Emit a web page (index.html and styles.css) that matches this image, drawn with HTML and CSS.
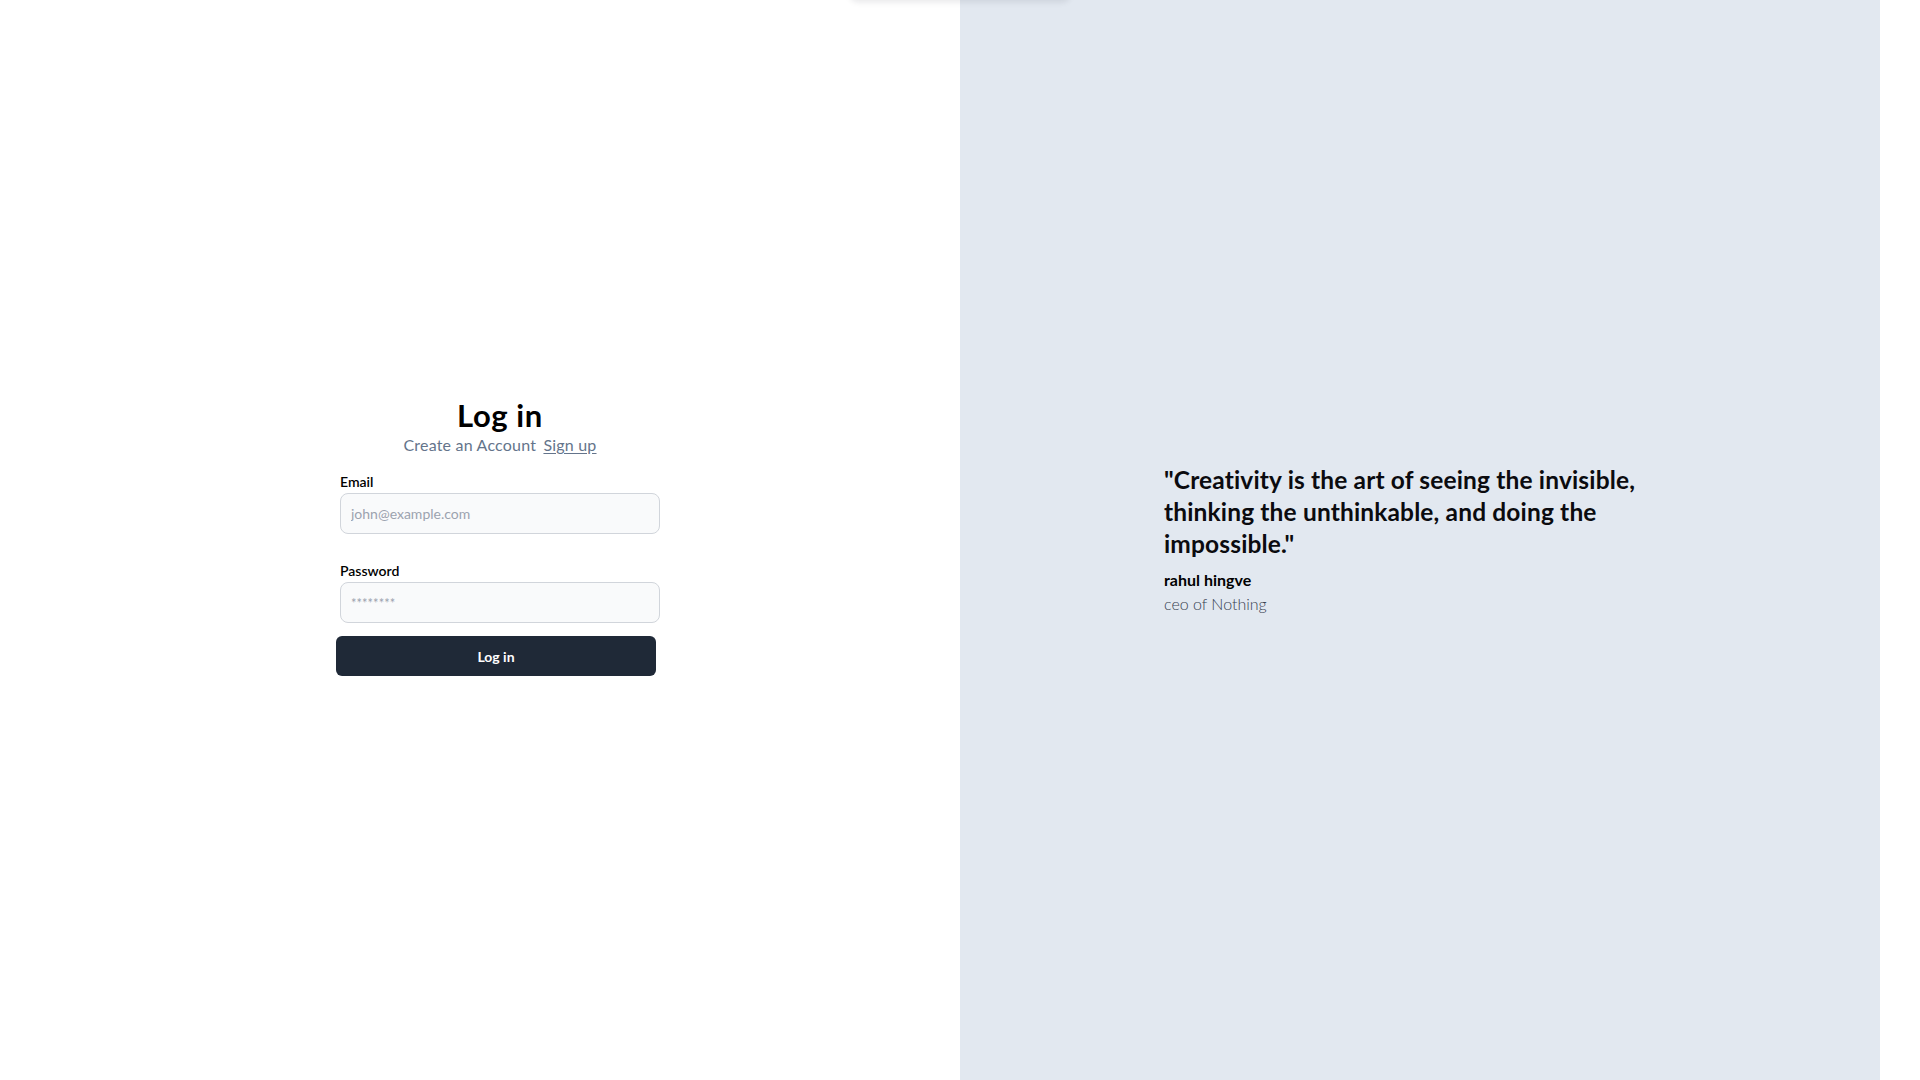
FILE: index.html
```html
<!DOCTYPE html>
<html lang="en">
<head>
<meta charset="utf-8">
<title>Log in</title>
<link rel="stylesheet" href="styles.css">
</head>
<body>
<div class="toast-ghost"></div>
<main class="page">
  <section class="auth-col">
    <form class="auth-form">
      <h1 class="auth-title">Log in</h1>
      <p class="auth-sub">Create an Account <a href="#" class="auth-link">Sign up</a></p>
      <label class="field-label" for="email">Email</label>
      <input class="field-input" id="email" type="email" placeholder="john@example.com">
      <label class="field-label field-label--spaced" for="password">Password</label>
      <input class="field-input field-input--pw" id="password" type="password" placeholder="********">
      <button class="btn-primary" type="button">Log in</button>
    </form>
  </section>
  <aside class="quote-col">
    <div class="quote-box">
      <blockquote class="quote-text">"Creativity is the art of seeing the invisible, thinking the unthinkable, and doing the impossible."</blockquote>
      <p class="quote-author">rahul hingve</p>
      <p class="quote-role">ceo of Nothing</p>
    </div>
  </aside>
</main>
</body>
</html>
```
FILE: styles.css
```css
* { box-sizing: border-box; }
html, body { margin: 0; padding: 0; background: #ffffff; }
body {
  font-family: "Lato", "Open Sans", "Liberation Sans", sans-serif;
  color: #030712;
  overflow: hidden;
}
.toast-ghost {
  position: absolute;
  top: -40px;
  left: 850px;
  width: 220px;
  height: 40px;
  border-radius: 8px;
  background: #fff;
  box-shadow: 0 2px 6px rgba(15, 23, 42, 0.10);
  z-index: 5;
}
.page {
  display: grid;
  grid-template-columns: 960px 920px;
  height: 1080px;
}
.auth-col {
  display: flex;
  align-items: center;
  justify-content: center;
  padding-left: 40px;
  padding-bottom: 7px;
}
.auth-form {
  width: 320px;
  display: flex;
  flex-direction: column;
}
.auth-title {
  margin: 0;
  font-size: 31px;
  line-height: 36px;
  font-weight: 700;
  letter-spacing: 0.6px;
  text-align: center;
  color: #000;
}
.auth-sub {
  margin: 0;
  font-size: 16px;
  line-height: 24px;
  letter-spacing: 0.2px;
  text-align: center;
  color: #64748b;
}
.auth-link {
  margin-left: 3px;
  color: #64748b;
  text-decoration: underline;
  text-underline-offset: 2px;
}
.field-label {
  display: block;
  margin-top: 15px;
  margin-bottom: 1px;
  font-size: 14px;
  line-height: 20px;
  font-weight: 600;
  color: #000;
}
.field-label--spaced { margin-top: 27px; }
.field-input {
  display: block;
  width: 320px;
  height: 41px;
  padding: 0 10px;
  font-family: inherit;
  font-size: 14px;
  color: #111827;
  background: #f9fafb;
  border: 1px solid #d1d5db;
  border-radius: 8px;
  outline: none;
}
.field-input::placeholder { color: #9ca3af; }
.field-input--pw::placeholder { font-size: 13px; }
.btn-primary {
  margin-top: 13px;
  margin-left: -4px;
  width: 320px;
  height: 40px;
  border: none;
  border-radius: 6px;
  background: #1f2937;
  color: #fff;
  font-family: inherit;
  font-size: 14px;
  font-weight: 700;
  cursor: pointer;
}
.quote-col {
  background: #e2e8f0;
  display: flex;
  align-items: center;
  justify-content: center;
}
.quote-box {
  width: 512px;
}
.quote-text {
  margin: 0;
  font-size: 24.5px;
  line-height: 32px;
  font-weight: 700;
  letter-spacing: 0.15px;
  color: #0b0b0f;
}
.quote-author {
  margin: 8px 0 0;
  font-size: 16px;
  line-height: 24px;
  font-weight: 700;
  color: #000;
}
.quote-role {
  margin: 0;
  font-size: 16px;
  line-height: 24px;
  font-weight: 300;
  color: #374151;
}
```
